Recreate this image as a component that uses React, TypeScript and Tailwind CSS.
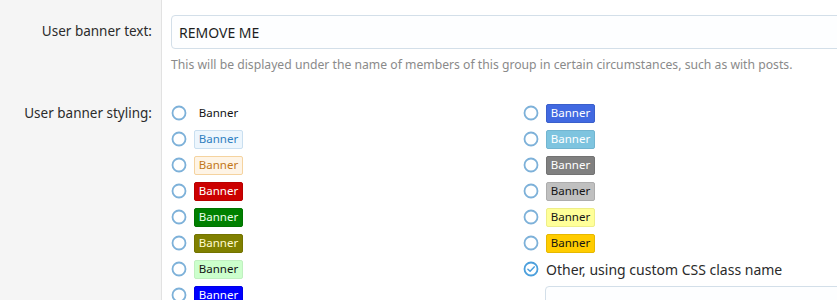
import React from "react";

const font = { fontFamily: '"Noto Sans", "Open Sans", sans-serif' };

type B = { cls: string; label?: string };

const left: B[] = [
  { cls: "border-transparent text-[#141414]" },
  { cls: "bg-[#edf6fd] border-[#c9dff0] text-[#2f7fbf]" },
  { cls: "bg-[#fef4e6] border-[#f5d39f] text-[#c27718]" },
  { cls: "bg-[#cc0000] border-[#b80000] text-white" },
  { cls: "bg-[#008000] border-[#007300] text-[#eaffea]" },
  { cls: "bg-[#808000] border-[#737300] text-[#fffbd0]" },
  { cls: "bg-[#ccffcc] border-[#c0f0c0] text-[#141414]" },
  { cls: "bg-[#0000ff] border-[#0000e6] text-white" },
];

const right: B[] = [
  { cls: "bg-[#4169e1] border-[#3a5fcb] text-white" },
  { cls: "bg-[#7ec4df] border-[#72b5d0] text-white" },
  { cls: "bg-[#808080] border-[#737373] text-white" },
  { cls: "bg-[#c0c0c0] border-[#adadad] text-[#141414]" },
  { cls: "bg-[#ffff99] border-[#eeee88] text-[#141414]" },
  { cls: "bg-[#ffcc00] border-[#e6b800] text-[#141414]" },
];

function Radio({ checked }: { checked?: boolean }) {
  return (
    <svg width="16" height="16" viewBox="0 0 16 16" className="shrink-0">
      <circle cx="8" cy="8" r="6.5" fill="white" stroke={checked ? "#4b9fdc" : "#7db1d9"} strokeWidth="1.8" />
      {checked && (
        <path d="M4.9 8.2 L7.1 10.3 L11.2 5.9" fill="none" stroke="#4b9fdc" strokeWidth="1.5" strokeLinecap="round" strokeLinejoin="round" />
      )}
    </svg>
  );
}

function Row({ b }: { b: B }) {
  return (
    <div className="flex items-center h-[26px] gap-[7px]">
      <Radio />
      <span
        className={`inline-flex items-center justify-center w-[49px] h-[19px] rounded-[2px] border text-[11.5px] leading-none ${b.cls}`}
      >
        Banner
      </span>
    </div>
  );
}

export default function App() {
  return (
    <div className="w-[837px] h-[300px] overflow-hidden bg-white flex" style={font}>
      <div className="w-[162px] shrink-0 bg-[#f5f5f5] border-r border-[#e2e2e2] flex flex-col items-end pr-[9px] text-[13.5px] text-[#2b2b2b]">
        <div className="h-[33px] mt-[15px] flex items-center">User banner text:</div>
        <div className="h-[26px] mt-[52px] flex items-center">User banner styling:</div>
      </div>
      <div className="flex-1 pl-[9px] flex flex-col">
        <div className="mt-[15px] h-[34px] w-[700px] shrink-0 rounded-[4px] border border-[#d3dfe9] bg-[#fdfeff] flex items-center pl-[7px] text-[14px] text-[#1e1e1e]">
          REMOVE ME
        </div>
        <div className="mt-[7px] text-[12.2px] text-[#8a8a8a] leading-[17px]">
          This will be displayed under the name of members of this group in certain circumstances, such as with posts.
        </div>
        <div className="mt-[27px] grid grid-cols-[352px_352px]">
          <div className="flex flex-col">
            {left.map((b, i) => (
              <Row key={i} b={b} />
            ))}
          </div>
          <div className="flex flex-col">
            {right.map((b, i) => (
              <Row key={i} b={b} />
            ))}
            <div className="flex items-center h-[26px] gap-[7px]">
              <Radio checked />
              <span className="text-[14px] text-[#2b2b2b]">Other, using custom CSS class name</span>
            </div>
            <div className="mt-[4px] ml-[22px] h-[34px] w-[400px] rounded-[4px] border border-[#d3dfe9] bg-[#fdfeff]" />
          </div>
        </div>
      </div>
    </div>
  );
}
